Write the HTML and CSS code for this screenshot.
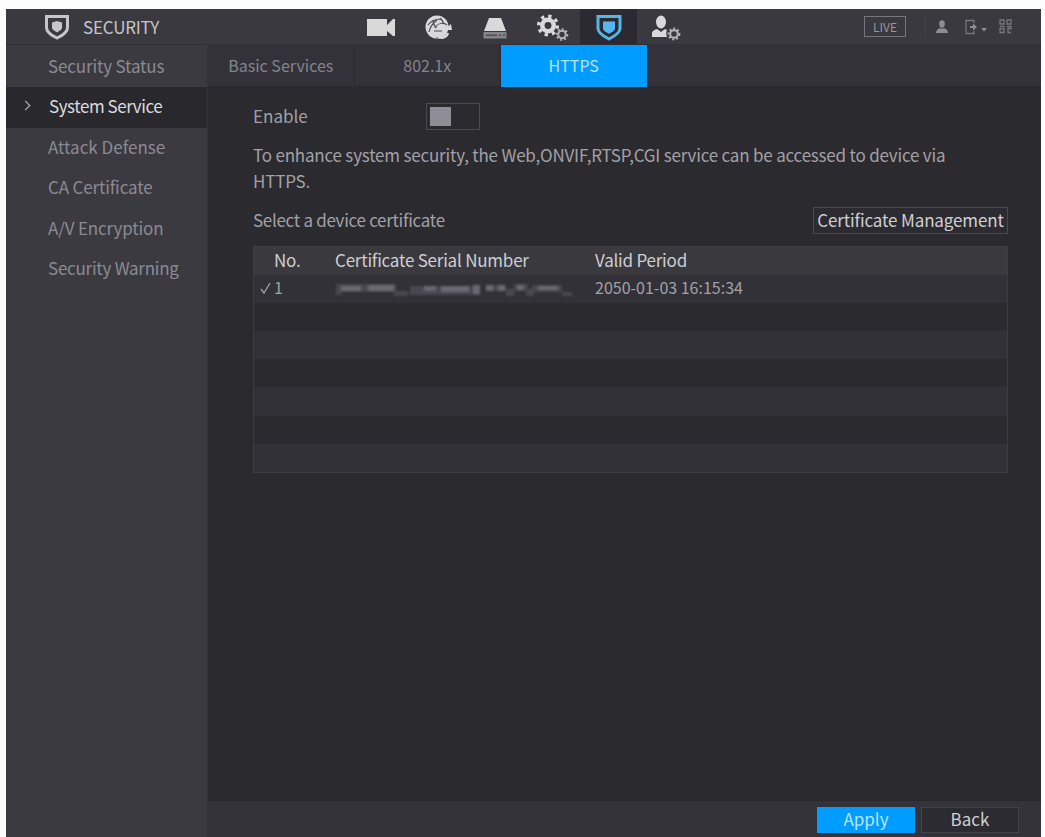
FILE: index.html
```
<!DOCTYPE html>
<html>

<head>
    <meta charset="utf-8">
    <title>Security</title>
    <link rel="stylesheet" href="styles.css">
</head>

<body>
    <div class="window">
        <header>
            <div class="title">
                <svg class="shield" width="26" height="26" viewBox="0 0 26 26">
                    <path d="M2.5 2.5h21v11c0 5-5 8-10.500 10.500C7.500 21.500 2.500 18.500 2.500 13.500z" fill="none" stroke="currentColor" stroke-width="3" />
                    <path d="M8 8.500l5-1.500 5 1.500v5c0 2-2.500 3.500-5 5-2.500-1.500-5-3-5-5z" fill="currentColor" />
                </svg>
                <span>SECURITY</span>
            </div>

            <nav class="icons">
                <div class="icon">
                    <svg width="30" height="28" viewBox="0 0 30 28"><path d="M1 6h20v17H1zM21 12l6-6h2v17h-2l-6-5z" /></svg>
                </div>
                <div class="icon">
                    <svg width="30" height="28" viewBox="0 0 30 28">
                        <circle cx="14" cy="14" r="11.500" />
                        <g class="cut">
                            <path d="M5 12c3-4 7-6 13-6M6 19c1-5 4-9 8-12M10 7c0 4 1 6 4 8M17 5c3 3 4 5 4 8" />
                            <path d="M12 15c3-5 9-6 12-3M11 18h8M13 24c5 2 9 0 12-4" />
                        </g>
                        <path class="line" d="M14 15c3-4 8-4 11 1M25 20c-2 5-7 6-11 3" />
                        <path d="M21 17h8l-1-6zM11 19h8l-7 6z" />
                    </svg>
                </div>
                <div class="icon">
                    <svg width="30" height="28" viewBox="0 0 30 28">
                        <path d="M9 5h12l5 13H4z" />
                        <path class="dim" d="M3.500 19h23v6.500h-23z" />
                        <path class="slots" d="M6 22.200h11M19 22.200h2M23 22.200h2" />
                    </svg>
                </div>
                <div class="icon">
                    <svg width="34" height="28" viewBox="0 0 34 28">
                        <circle class="gear" cx="13" cy="12.500" r="5.700" />
                        <circle class="teeth" cx="13" cy="12.500" r="9.300" />
                        <circle class="gear small" cx="27" cy="21.500" r="3.700" />
                        <circle class="teeth small" cx="27" cy="21.500" r="5.300" />
                    </svg>
                </div>
                <div class="icon active">
                    <svg width="28" height="28" viewBox="0 0 28 28">
                        <path class="outline" d="M3 3.500h22v12c0 4.500-6 8-11 10.500C9 23.500 3 20 3 15.500z" />
                        <path class="heart" d="M8 8.500h12v7c0 2-3.500 4-6 5.200-2.500-1.200-6-3.200-6-5.200z" />
                    </svg>
                </div>
                <div class="icon">
                    <svg width="32" height="28" viewBox="0 0 32 28">
                        <ellipse cx="11" cy="9" rx="5" ry="6.500" />
                        <path d="M2 24v-4c0-2 2-3 5-4l4 3 4-3 2 1c-1 2-1 4 0 7z" />
                        <circle class="gear small" cx="24" cy="21" r="3.800" />
                        <circle class="teeth small" cx="24" cy="21" r="5.400" />
                    </svg>
                </div>
            </nav>

            <div class="tools">
                <span class="live">LIVE</span>
                <span class="divider"></span>
                <svg class="user" width="14" height="14" viewBox="0 0 14 14"><ellipse cx="7" cy="4" rx="2.800" ry="3.700" /><path d="M1 13c0-3 2-4 4.500-5l1.500 1 1.500-1C11 9 13 10 13 13z" /></svg>
                <svg class="logout" width="24" height="16" viewBox="0 0 24 16">
                    <path class="thin" d="M10 4V1.500H2v13h8V12" />
                    <path d="M6 7h3V4.500L13 8l-4 3.500V9H6zM17 9h6l-3 3.500z" />
                </svg>
                <svg class="qr" width="13" height="15" viewBox="0 0 13 15">
                    <path class="thin" d="M1 1h4v4H1zM8 1h4v4H8zM1 9.500h4v4H1zM8 7.500h4v2H9v4h3M1 7.300h5" />
                </svg>
            </div>
        </header>

        <div class="main">
            <ul class="sidebar">
                <li class="first">Security Status</li>
                <li class="active">System Service</li>
                <li class="attack">Attack Defense</li>
                <li>CA Certificate</li>
                <li>A/V Encryption</li>
                <li class="warning">Security Warning</li>
            </ul>

            <div class="page">
                <div class="tabs">
                    <div class="tab">Basic Services</div>
                    <div class="tab">802.1x</div>
                    <div class="tab active">HTTPS</div>
                </div>

                <div class="content">
                    <div class="enable">
                        <span>Enable</span>
                        <div class="switch"></div>
                    </div>
                    <p>To enhance system security, the Web,ONVIF,RTSP,CGI service can be accessed to device via<br>HTTPS.</p>
                    <div class="select">
                        <span>Select a device certificate</span>
                        <button class="manage">Certificate Management</button>
                    </div>

                    <div class="table">
                        <div class="row head">
                            <span class="no">No.</span>
                            <span class="serial">Certificate Serial Number</span>
                            <span class="valid">Valid Period</span>
                        </div>
                        <div class="row selected">
                            <span class="no"><svg class="check" width="11" height="12" viewBox="0 0 11 12"><path d="M1 7l3 4L10 1" /></svg>1</span>
                            <span class="serial">
                                <!-- masked serial number -->
                                <svg class="mask" width="238" height="16" viewBox="0 0 238 16">
                                    <path class="m1" d="M0 3h60v8H6v3H0zM58 10h14v5H58zM74 5h70v9H74zM150 4h20v6h-20zM170 8h8v7h-8zM178 3h14v7h-14zM190 8h8v7h-8zM196 4h30v7h-30zM226 11h10v4h-10z" />
                                    <path class="m2" d="M5 5h20v5H5zM32 4h26v6H32zM88 5h12v5H88zM105 5h28v6h-28zM137 4h7v9h-7zM150 4h7v6h-7zM162 4h7v6h-7zM181 4h7v5h-7zM202 5h20v4h-20z" />
                                </svg>
                            </span>
                            <span class="date">2050-01-03 16:15:34</span>
                        </div>
                        <div class="row"></div>
                        <div class="row"></div>
                        <div class="row"></div>
                        <div class="row"></div>
                        <div class="row"></div>
                        <div class="row"></div>
                    </div>
                </div>

                <footer>
                    <button class="apply">Apply</button>
                    <button>Back</button>
                </footer>
            </div>
        </div>
    </div>
</body>

</html>
```
FILE: styles.css
```
* {
    box-sizing: border-box;
}

body {
    margin: 0;
    padding: 9px 4px 0 6px;
    height: 837px;
    overflow: hidden;
    background-color: #fcfcfd;
    font-family: "Noto Sans CJK SC", sans-serif;
    font-size: 17px;
    color: #a2a1a7;
}

.window {
    display: flex;
    flex-direction: column;
    height: 828px;
    background-color: #2b2a2f;
}

header {
    display: flex;
    height: 36px;
    background-color: #3a393f;
    border-bottom: 1px solid #302f36;
}

.title {
    display: flex;
    align-items: center;
    width: 346px;
    padding-left: 38px;
    color: #c6c5ca;
}

.title span {
    margin-left: 13px;
    letter-spacing: -0.2px;
}

.icons {
    display: flex;
    width: 400px;
}

.icon {
    display: flex;
    justify-content: center;
    align-items: center;
    width: 57px;
    fill: #d9d9da;
}

.icon.active {
    background-color: #2b2a33;
}

.cut {
    fill: none;
    stroke: #4a494f;
    stroke-width: 1.2;
}

.slots {
    stroke: #4f4e54;
    stroke-width: 1.5;
}

.line {
    fill: none;
    stroke: #d9d9da;
    stroke-width: 2.5;
}

.dim {
    fill: #858489;
}

.gear {
    fill: none;
    stroke: #d9d9da;
    stroke-width: 4.5;
}

.teeth {
    fill: none;
    stroke: #d9d9da;
    stroke-width: 3.5;
    stroke-dasharray: 3.25 4.05;
}

.gear.small {
    stroke: #b5b5b8;
    stroke-width: 2;
}

.teeth.small {
    stroke: #b5b5b8;
    stroke-width: 2;
    stroke-dasharray: 2 2;
}

.outline {
    fill: none;
    stroke: #58b5df;
    stroke-width: 3;
}

.heart {
    fill: #58b5ef;
}

.tools {
    display: flex;
    align-items: center;
    flex: 1;
    padding-left: 112px;
    fill: #8e8d93;
}

.live {
    width: 42px;
    height: 21px;
    border: 1px solid #77767d;
    font-size: 12px;
    line-height: 19px;
    text-align: center;
    color: #97969c;
}

.divider {
    width: 1px;
    height: 18px;
    margin-left: 19px;
    background-color: #45444a;
}

.user {
    margin-left: 9px;
}

.logout {
    margin-left: 15px;
}

.qr {
    margin-left: 11px;
}

.thin {
    fill: none;
    stroke: #77767d;
    stroke-width: 1.3;
}

.main {
    display: flex;
    flex: 1;
}

.sidebar {
    width: 202px;
    margin: 0;
    padding: 0;
    list-style: none;
    background-color: #3b3a41;
    border-right: 1px solid #34333a;
    color: #8b8a91;
}

.sidebar li {
    height: 40.500px;
    padding-left: 42px;
    line-height: 38px;
    letter-spacing: -0.15px;
    white-space: nowrap;
}

.sidebar .first {
    height: 42px;
    line-height: 42px;
}

.sidebar .active {
    display: flex;
    padding-left: 18px;
    background-color: #29282d;
    letter-spacing: -0.45px;
    color: #dcdbdf;
}

.sidebar .active::before {
    content: "";
    width: 6px;
    height: 6px;
    margin: 15px 20px 0 -2px;
    border: solid #c4c3c8;
    border-width: 1.5px 1.5px 0 0;
    transform: rotate(45deg);
}

.sidebar .attack {
    letter-spacing: 0;
}

.sidebar .warning {
    letter-spacing: -0.25px;
}

.page {
    display: flex;
    flex-direction: column;
    flex: 1;
}

.tabs {
    display: flex;
    height: 42px;
    background-color: #33323b;
    border-bottom: 1px solid #29282e;
}

.tab {
    width: 146.500px;
    border-right: 1px solid #2b2a31;
    font-size: 16px;
    line-height: 41px;
    text-align: center;
    color: #85848c;
}

.tab.active {
    width: 145.500px;
    height: 42px;
    border: none;
    background-color: #009cff;
    color: #b8e3fb;
}

.content {
    flex: 1;
    padding: 16px 33px 0 45px;
}

.enable {
    display: flex;
    align-items: center;
    height: 27px;
}

.enable span {
    width: 173px;
    margin-top: -2px;
}

.switch {
    width: 54px;
    height: 27px;
    padding: 3px;
    border: 1px solid #4b4a54;
}

.switch::before {
    content: "";
    display: block;
    width: 21px;
    height: 19px;
    background-color: #8e8d98;
}

p {
    margin: 12px 0 0;
    line-height: 26px;
    letter-spacing: -0.2px;
    white-space: nowrap;
}

.select {
    display: flex;
    justify-content: space-between;
    align-items: center;
    height: 28px;
    margin-top: 12px;
}

.select span {
    margin-top: -2px;
    letter-spacing: -0.3px;
}

button {
    width: 98px;
    height: 26px;
    padding: 0 0 3px;
    border: 1px solid #424147;
    background-color: #2c2b31;
    font-family: inherit;
    font-size: 17px;
    line-height: 20px;
    color: #d0cfd4;
}

.manage {
    width: 195px;
    height: 27px;
    padding: 0;
    border-color: #4a4a50;
    letter-spacing: -0.13px;
}

.table {
    margin-top: 12px;
    border: 1px solid #3d3c42;
}

.row {
    display: flex;
    height: 28.100px;
    line-height: 25px;
}

.row:nth-child(even) {
    background-color: #323138;
}

.row.head {
    background-color: #3a393e;
    letter-spacing: -0.22px;
    color: #cfced2;
}

.no {
    width: 81px;
    padding-left: 20px;
}

.selected .no {
    padding-left: 6px;
    font-size: 16px;
}

.check {
    margin-right: 3px;
    fill: none;
    stroke: #a2a1a7;
    stroke-width: 1.3;
}

.serial {
    width: 260px;
}

.mask {
    display: block;
    margin: 6px 0 0 1px;
    filter: blur(1px);
}

.m1 {
    fill: #494850;
}

.m2 {
    fill: #6a6971;
}

.date {
    font-size: 16px;
}

footer {
    display: flex;
    justify-content: flex-end;
    gap: 6px;
    height: 37px;
    padding: 6px 22px 0 0;
    background-color: #34333a;
    border-top: 1px solid #29282d;
}

.apply {
    border: none;
    background-color: #009cff;
    color: #bce5fc;
}
```
